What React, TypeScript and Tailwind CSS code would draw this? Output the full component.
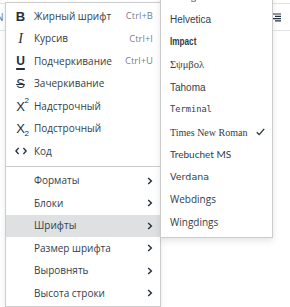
import { ReactNode } from "react"

const ui = "font-['Open_Sans',sans-serif]"

function Chevron() {
  return (
    <svg width="6" height="8" viewBox="0 0 6 8" className="text-[#222f3e]">
      <path d="M1.2 1 L4.4 4 L1.2 7" fill="none" stroke="currentColor" strokeWidth="1.4" />
    </svg>
  )
}

function CodeIcon() {
  return (
    <svg width="12" height="8" viewBox="0 0 12 8" className="text-[#222f3e]">
      <path d="M3.6 1 L0.9 4 L3.6 7 M8.4 1 L11.1 4 L8.4 7" fill="none" stroke="currentColor" strokeWidth="1.3" />
    </svg>
  )
}

interface Item {
  icon?: ReactNode
  label: string
  shortcut?: string
  sub?: boolean
  active?: boolean
}

const formatItems: Item[] = [
  {
    icon: <span className="font-['Liberation_Sans',sans-serif] text-[13px] font-bold leading-none">B</span>,
    label: "Жирный шрифт",
    shortcut: "Ctrl+B",
  },
  {
    icon: <span className="font-['Liberation_Serif',serif] text-[14px] italic leading-none">I</span>,
    label: "Курсив",
    shortcut: "Ctrl+I",
  },
  {
    icon: (
      <span className="font-['Liberation_Sans',sans-serif] text-[12px] font-semibold leading-none underline underline-offset-[3px] decoration-[1.5px]">
        U
      </span>
    ),
    label: "Подчеркивание",
    shortcut: "Ctrl+U",
  },
  {
    icon: <span className="font-['Liberation_Sans',sans-serif] text-[13px] leading-none line-through decoration-[1.3px]">S</span>,
    label: "Зачеркивание",
  },
  {
    icon: (
      <span className="relative font-['Liberation_Sans',sans-serif] text-[13px] leading-none">
        X<span className="absolute -right-[4px] -top-[3px] text-[8px]">2</span>
      </span>
    ),
    label: "Надстрочный",
  },
  {
    icon: (
      <span className="relative font-['Liberation_Sans',sans-serif] text-[13px] leading-none">
        X<span className="absolute -right-[4px] -bottom-[3px] text-[8px]">2</span>
      </span>
    ),
    label: "Подстрочный",
  },
  { icon: <CodeIcon />, label: "Код" },
]

const menuItems: Item[] = [
  { label: "Форматы", sub: true },
  { label: "Блоки", sub: true },
  { label: "Шрифты", sub: true, active: true },
  { label: "Размер шрифта", sub: true },
  { label: "Выровнять", sub: true },
  { label: "Высота строки", sub: true },
]

const fonts: { name: string; cls: string; checked?: boolean }[] = [
  { name: "Georgia", cls: "font-['Liberation_Serif',serif] text-[10.5px]" },
  { name: "Helvetica", cls: "font-['Liberation_Sans',sans-serif] text-[10px]" },
  {
    name: "Impact",
    cls: "inline-block origin-left scale-x-[0.78] font-['Liberation_Sans',sans-serif] text-[10.5px] font-black text-[#141c26]",
  },
  { name: "Σψμβολ", cls: "font-['Liberation_Serif',serif] text-[10.5px]" },
  { name: "Tahoma", cls: "font-['Liberation_Sans',sans-serif] text-[10px]" },
  { name: "Terminal", cls: "font-['DejaVu_Sans_Mono',monospace] text-[8.7px]" },
  { name: "Times New Roman", cls: "font-['Liberation_Serif',serif] text-[10px]", checked: true },
  { name: "Trebuchet MS", cls: "font-['Lato',sans-serif] text-[10px]" },
  { name: "Verdana", cls: "font-['DejaVu_Sans',sans-serif] text-[9.5px]" },
  { name: "Webdings", cls: `${ui} text-[10px]` },
  { name: "Wingdings", cls: `${ui} text-[10px]` },
]

function Row({ item }: { item: Item }) {
  return (
    <div
      className={`flex h-[22.5px] items-center pl-[6px] pr-[7px] ${item.active ? "bg-[#dee0e2]" : ""}`}
    >
      <div className="flex w-[17px] items-center justify-center text-[#222f3e]">{item.icon}</div>
      <span className={`ml-[5px] flex-1 text-[10px] text-[#343d48] ${ui}`}>{item.label}</span>
      {item.shortcut && (
        <span className={`text-[9.5px] text-[#222f3e]/65 ${ui}`}>{item.shortcut}</span>
      )}
      {item.sub && <Chevron />}
    </div>
  )
}

export default function App() {
  return (
    <div className="relative h-[307px] w-[290px] overflow-hidden bg-white">
      {/* editor toolbar behind the menus */}
      <div className="mt-[3px] flex h-[28px] items-center justify-between border-y border-[#e3e3e3] bg-white pl-0 pr-[9px]">
        <span className={`-ml-[4px] text-[10px] text-[#6b7580] ${ui}`}>N</span>
        <svg width="8" height="9" viewBox="0 0 8 9" className="text-[#222f3e]">
          <path d="M0 1h8M2 3.3h6M0 5.6h8M2 7.9h6" stroke="currentColor" strokeWidth="1.2" />
        </svg>
      </div>

      {/* main menu */}
      <div className="absolute left-[5px] top-[2px] w-[156px] border border-[#cccccc] bg-white pt-[2px] pb-[1px] shadow-[0_3px_6px_rgba(34,47,62,0.1)]">
        {formatItems.map((it) => (
          <Row key={it.label} item={it} />
        ))}
        <div className="flex h-[7px] items-center">
          <div className="h-px w-full bg-[#cccccc]" />
        </div>
        {menuItems.map((it) => (
          <Row key={it.label} item={it} />
        ))}
      </div>

      {/* fonts submenu */}
      <div className="absolute left-[160px] top-[-18px] w-[113px] border border-[#cccccc] bg-white py-[3px] shadow-[0_3px_6px_rgba(34,47,62,0.12)]">
        {fonts.map((f) => (
          <div key={f.name} className="flex h-[22.5px] items-center pl-[9px] pr-[7px]">
            <span className={`flex-1 text-[#343d48] ${f.cls}`}>{f.name}</span>
            {f.checked && (
              <svg width="9" height="8" viewBox="0 0 9 8" className="text-[#222f3e]">
                <path d="M0.8 4.2 L3.2 6.6 L8.2 0.8" fill="none" stroke="currentColor" strokeWidth="1.3" />
              </svg>
            )}
          </div>
        ))}
      </div>
    </div>
  )
}
